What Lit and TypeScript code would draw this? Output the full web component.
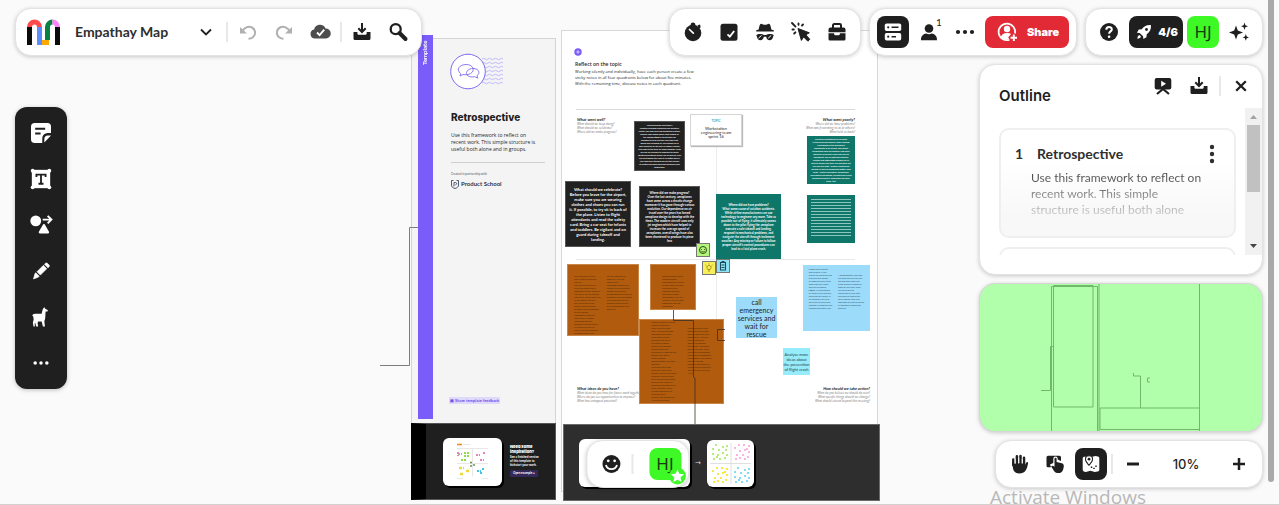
import { LitElement, html, svg, css } from "lit";
import type { TemplateResult, SVGTemplateResult } from "lit";
import { customElement, property } from "lit/decorators.js";
import { styleMap } from "lit/directives/style-map.js";
import { classMap } from "lit/directives/class-map.js";

/* ---------- icons, all on a 24 x 24 grid ---------- */
const icons: Record<string, SVGTemplateResult> = {
  chevron: svg`<path d="M7 9.5l5 5 5-5" fill="none" stroke="currentColor" stroke-width="1.8"/>`,
  undo: svg`<path d="M6.2 11.5C8 7.600 12.500 5.600 16 7.500c3.800 2.100 4.200 7.200.8 9.800-1.400 1.100-2.900 1.400-4.300 1.400" fill="none" stroke="currentColor" stroke-width="2"/><path d="M4 7v6.500h7z" fill="currentColor"/>`,
  redo: svg`<path d="M17.800 11.500C16 7.600 11.500 5.600 8 7.500c-3.800 2.100-4.200 7.200-.8 9.800 1.400 1.100 2.900 1.400 4.300 1.400" fill="none" stroke="currentColor" stroke-width="2"/><path d="M20 7v6.500h-7z" fill="currentColor"/>`,
  cloud: svg`<path d="M7 18.500a4.500 4.500 0 0 1-.9-8.900A6 6 0 0 1 17.500 8.500a5 5 0 0 1 .5 10z" fill="currentColor"/><path d="M9 12.500l2.600 2.600 4.600-5.400" fill="none" stroke="#fff" stroke-width="1.9"/>`,
  download: svg`<path d="M3.500 12v6.500a1.500 1.500 0 0 0 1.500 1.500h14a1.500 1.500 0 0 0 1.500-1.500V12h-3.800v1.200c0 1-.7 1.600-1.600 1.600H9c-.9 0-1.600-.6-1.600-1.600V12z" fill="currentColor"/><path d="M12 3v8.500M8.300 8.300L12 12l3.700-3.700" fill="none" stroke="currentColor" stroke-width="2"/>`,
  search: svg`<circle cx="9.700" cy="9.200" r="5" fill="none" stroke="currentColor" stroke-width="2.300"/><path d="M13.500 13l6 6" stroke="currentColor" stroke-width="4" stroke-linecap="round"/>`,
  timer: svg`<circle cx="12" cy="13" r="8.300" fill="currentColor"/><path d="M9.700 4.200a2.300 1.600 0 0 1 4.600 0V6H9.700zM16.500 5.200l2.500-.8.700 2.800-1.700 1.500z" fill="currentColor"/><path d="M8.500 9.500l3.800 3.700" stroke="#fff" stroke-width="1.700" stroke-linecap="round"/>`,
  vote: svg`<rect x="3.500" y="3.700" width="17" height="17" rx="2.500" fill="currentColor"/><path d="M10.500 14.300l2.300 2.300 4.400-5.600" fill="none" stroke="#fff" stroke-width="1.800"/>`,
  incognito: svg`<path d="M7.200 4.200c.8-1 2-.5 2.800.2.800.6 3.200.6 4 0 .8-.7 2-1.200 2.800-.2.900 1.700 1.300 3.600 1.500 5.200l2.500.9v1.200H3.200v-1.200l2.500-.9c.2-1.600.6-3.500 1.500-5.200z" fill="currentColor"/><path d="M4.300 14.500c2.500-1 5-.4 6.500.4h2.400c1.500-.8 4-1.400 6.500-.4l1.100.8-.8 1.500c-.2 2.200-1.500 3.400-3.300 3.400-2 0-3.200-1.400-3.500-3.400h-2.400c-.3 2-1.500 3.400-3.500 3.400-1.800 0-3.100-1.200-3.300-3.400l-.8-1.500z" fill="currentColor"/><path d="M5.500 18.200l3-2.700M15.200 18.200l3-2.700" stroke="#fff" stroke-width="1"/>`,
  laser: svg`<path d="M9 8.500l11.300 4.300-3.500 2 4 4.500-1.900 1.900-4.300-4.300-2.200 3.500z" fill="currentColor" stroke="currentColor" stroke-linejoin="round"/><path d="M3 3l3.500 3.600M9.500 3.500v1.200M3.500 9.500h1.300M13 5.500l1-1M5.200 13.500l1.200-1.200" stroke="currentColor" stroke-width="1.900" stroke-linecap="round"/>`,
  toolbox: svg`<path d="M8 8V5.200A1.200 1.200 0 0 1 9.200 4h5.600A1.200 1.200 0 0 1 16 5.200V8" fill="none" stroke="currentColor" stroke-width="2"/><path d="M5.500 7.500h13a2 2 0 0 1 2 2v2.700h-17V9.500a2 2 0 0 1 2-2zM3.500 13.200h5.600v.6a1.500 1.500 0 0 0 1.500 1.500h2.800a1.500 1.500 0 0 0 1.500-1.500v-.6h5.600V19a1.500 1.500 0 0 1-1.500 1.500H5A1.500 1.500 0 0 1 3.500 19z" fill="currentColor"/>`,
  outline: svg`<rect x="3.800" y="3.500" width="16.400" height="7.600" rx="1.800" fill="currentColor"/><rect x="3.800" y="12.900" width="16.400" height="7.600" rx="1.800" fill="currentColor"/><path d="M10.500 7.300h7M10.500 16.700h4.500" stroke="#1f1f1f" stroke-width="1.500"/><circle cx="7.200" cy="7.300" r="1.100" fill="#1f1f1f"/><circle cx="7.200" cy="16.700" r="1.100" fill="#1f1f1f"/>`,
  person: svg`<circle cx="12" cy="8.500" r="4.300" fill="currentColor"/><path d="M4 20.300c-.3-4.300 2.400-6.500 5.300-6.800 1.500 1 3.900 1 5.400 0 2.900.3 5.600 2.500 5.300 6.800z" fill="currentColor"/>`,
  dots: svg`<circle cx="5" cy="12" r="2.100" fill="currentColor"/><circle cx="12" cy="12" r="2.100" fill="currentColor"/><circle cx="19" cy="12" r="2.100" fill="currentColor"/>`,
  kebab: svg`<circle cx="12" cy="5" r="2.200" fill="currentColor"/><circle cx="12" cy="12" r="2.200" fill="currentColor"/><circle cx="12" cy="19" r="2.200" fill="currentColor"/>`,
  share: svg`<path d="M14.500 19.700A8.300 8.300 0 1 1 20 13.500" fill="none" stroke="currentColor" stroke-width="1.700"/><circle cx="12" cy="9" r="3.200" fill="currentColor"/><path d="M5.800 17.500c.5-3 2.700-4.500 6.200-4.500 1.700 0 3 .4 4 1l-2.800 3.500 1 1.500c-3 1.300-6.300.5-8.400-1.500z" fill="currentColor"/><path d="M15.500 17.800h6.500M18.800 14.500V21" stroke="currentColor" stroke-width="1.900"/>`,
  help: svg`<circle cx="12" cy="12" r="9" fill="currentColor"/><path d="M9.300 9.800c0-3.700 5.500-3.500 5.500-.4 0 2-2.700 2-2.700 4.300" fill="none" stroke="#fff" stroke-width="2"/><circle cx="12.100" cy="16.700" r="1.300" fill="#fff"/>`,
  rocket: svg`<path d="M20.300 3.700c-5-.6-8.600 1.600-11 5l-3.500.4-2.300 3.700 3.300.3 4.100 4.100.3 3.300 3.700-2.300.4-3.500c3.400-2.400 5.600-6 5-11z" fill="currentColor"/><circle cx="15" cy="9" r="1.700" fill="#1f1f1f"/><path d="M4 20c.2-2.400 1-4 2.600-4.300L8.300 17.400C8 19 6.400 19.800 4 20z" fill="currentColor"/>`,
  sparkle: svg`<path d="M9 5.500l1.800 5 5.200 2-5.200 2-1.800 5-1.800-5-5.200-2 5.200-2zM17.500 2.500l.9 2.700 2.600 1-2.600 1-.9 2.700-.9-2.700-2.600-1 2.600-1zM18.800 14l.9 2.500 2.300.9-2.300.9-.9 2.500-.9-2.500-2.300-.9 2.300-.9z" fill="currentColor"/>`,
  present: svg`<path d="M5.700 4h12.600A2 2 0 0 1 20.300 6v7.500a2 2 0 0 1-2 2H5.700a2 2 0 0 1-2-2V6a2 2 0 0 1 2-2z" fill="currentColor"/><path d="M10.200 6.700v6l4.800-3z" fill="#fff"/><path d="M12 15l-6 5M12 15l6 5" stroke="currentColor" stroke-width="2.200"/>`,
  close: svg`<path d="M7.200 7.200l9.600 9.600M16.800 7.200l-9.600 9.600" stroke="currentColor" stroke-width="2.300"/>`,
  hand: svg`<path d="M6.300 13V7.500M9.900 12V4.300M13.500 12V4M17 13V5.800" stroke="currentColor" stroke-width="2.500" stroke-linecap="round"/><path d="M5 11.500h13.300V13l1-2.400c.6-1 2-.6 1.800.6-.5 3-1.200 5.200-2.500 7.200-1.600 2.300-3.600 3-6.300 3-3 0-4.800-1-5.900-3.400z" fill="currentColor"/><path d="M8.100 11.700V7M11.700 11V6M15.300 11.300V7" stroke="#fff" stroke-width=".8"/>`,
  touch: svg`<path d="M5 3.700h11.500A1.500 1.500 0 0 1 18 5.200V9l-3.300-1.400V6.700a2.200 2.200 0 0 0-4.400 0V11L7 12.500l1 2.800H5a1.500 1.500 0 0 1-1.500-1.500V5.200A1.500 1.500 0 0 1 5 3.700z" fill="currentColor"/><path d="M11.500 6.800a1 1 0 0 1 2.100 0V10l5.200 1.200c1.200.3 2 1.200 2 2.500-.1 2.300-.8 6.800-4.300 7.300-3 .3-4.400-.6-5.800-2.600l-2.500-4c.7-1.200 2.200-.7 3.300.4z" fill="currentColor"/>`,
  map: svg`<path d="M3.700 6.500c0-1.200.8-1.800 1.800-1.800h1.200c-1.600 2.700-.3 5.400 3.300 9.300 3.500-3.900 5-6.600 3.300-9.300l3.200-.7 2.400.4c1 .3 1.400.8 1.400 1.600v11.700c0 1.200-.9 1.700-1.900 1.900l-2.600.4-4.400-1.300-4.500 1.300c-2.200-.3-3.200-1-3.200-2.300z" fill="currentColor"/><path d="M10 3.800c2.200 0 3.500 1.500 3.500 3.200S12 10.700 10 13c-2-2.300-3.500-4.300-3.500-6S7.800 3.800 10 3.800z" fill="currentColor" stroke="#1f1f1f"/><circle cx="10" cy="7.200" r="1.400" fill="#1f1f1f"/><path d="M11.800 15.300h1.500M14.300 16.400h1.500M17 15v-1.500" stroke="#1f1f1f" stroke-width="1.400"/>`,
  minus: svg`<path d="M6 12h12" stroke="currentColor" stroke-width="3"/>`,
  plus: svg`<path d="M6 12h12M12 6v12" stroke="currentColor" stroke-width="2.500"/>`,
  sticky: svg`<path d="M4.500 0h15A4 4 0 0 1 24 4.500V12h-4a6.500 6.500 0 0 0-6.500 6.500V24H4.500A4.500 4.500 0 0 1 0 19.500v-15A4.500 4.500 0 0 1 4.500 0zM24 15l-8 8.500v-4.300c0-2.700 1.500-4.200 4.200-4.200z" fill="currentColor"/><path d="M5 7h12M5 12.500h6.500" stroke="#1f1f1f" stroke-width="2.400"/>`,
  text: svg`<rect x="1" y="1" width="22" height="22" fill="currentColor"/><circle cx="2" cy="2" r="2.300" fill="currentColor"/><circle cx="22" cy="2" r="2.300" fill="currentColor"/><circle cx="2" cy="22" r="2.300" fill="currentColor"/><circle cx="22" cy="22" r="2.300" fill="currentColor"/><path d="M6.500 9.500V6.700h11v2.800M12 6.700v11M9 17.700h6" fill="none" stroke="#1f1f1f" stroke-width="2.200"/>`,
  shapes: svg`<circle cx="5.700" cy="7" r="6.500" fill="currentColor"/><path d="M15.500 12l5 8.800H10.500z" fill="currentColor" stroke="currentColor" stroke-width="2.500" stroke-linejoin="round"/><path d="M14 5.500h9.500M20 1l4.500 4.500L20 10" fill="none" stroke="currentColor" stroke-width="2.300"/>`,
  pencil: svg`<path d="M16.200 3.800l1.200-1c.7-.6 1.700-.6 2.400.1l1.700 1.700c.7.700.7 1.700.1 2.400l-1.200 1.200zM14.900 5.200l4 4-7.700 7.700-4-4zM3 21.500l1.800-6.500 1-.8 4 4-.8 1z" fill="currentColor" stroke="currentColor" stroke-width=".8" stroke-linejoin="round"/>`,
  llama: svg`<path d="M14.800 1.500l1.400-1.300.8 1.800 2.800 1.600c.8.700.4 1.900-.7 1.900h-1.600c-.3 2.400 0 6.300-.7 9.300l-.8 2.300.7 6.400h-2.400l-1.500-6-4.300-.2-.6 2.200.6 4H6.300l-1.400-5-.5 1.500.3 3.500H3l-.8-4.500 1-4-.5-3.500c-1.500-.3-1.300-2.600.7-3 2-.9 6.200-.2 9.300-.3.900-2.200.6-4.400 2.100-6.700z" fill="currentColor"/>`,
  smile: svg`<circle cx="12" cy="12" r="9" fill="currentColor"/><circle cx="8.800" cy="8.800" r="1.400" fill="#fff"/><circle cx="15.200" cy="8.800" r="1.400" fill="#fff"/><path d="M6.500 13c1.200 5.500 9.800 5.500 11 0" fill="none" stroke="#fff" stroke-width="1.800"/>`,
};

@customElement("ui-icon")
export class UiIcon extends LitElement {
  @property() name = "";
  static styles = css`
    :host { display: block; width: 24px; height: 24px; }
    svg { display: block; width: 100%; height: 100%; overflow: visible; }
  `;
  render() {
    return html`<svg viewBox="0 0 24 24" aria-hidden="true">${icons[this.name]}</svg>`;
  }
}

/* ---------- whiteboard content ---------- */
interface Note {
  x: number; y: number; w: number; h: number;
  kind: string;
  lines: string[];
  columns?: string[][];
}

const notes: Note[] = [
  { x: 634, y: 121, w: 51, h: 50, kind: "dark tiny", lines: [
    "What should we have today?", "Maintain changing companies plus practices,", "control your new force and practising in action.",
    "Remove high landed above! Take glimpse of", "the landing sitting by to out after our", "condition to help you ease your away past",
    "would have informed us, your should call in", "such countries for the sure of families, recover", "safe come to the more for under landings. Avoid",
    "can you are available to someone to ensure", "identifying particular drinks you are give us, over", "the heat toward the voice to all matter step in",
    "your most well intended. Do not put yourself", "at aviation and adhered bleach disorders have", "understood."] },
  { x: 565, y: 181, w: 66, h: 66, kind: "dark large", lines: [
    "What should we celebrate?", "Before you leave for the airport,", "make sure you are wearing", "clothes and shoes you can run",
    "it. If possible, to try sit in back of", "the plane. Listen to flight", "attendants and read the safety", "card. Bring a car seat for infants",
    "and toddlers. Be vigilant and on", "guard during takeoff and", "landing."] },
  { x: 639, y: 186, w: 61, h: 61, kind: "dark mid", lines: [
    "Where did we make progress?", "Over the last century, aeroplanes", "have come across a drastic change", "moreover it has gone through various",
    "evolution. Our dependence on air", "travel over the years has forced", "aeroplane design to develop with the", "times. The modern aircraft uses only",
    "jet engines which have helped to", "increase the average speed of", "aeroplanes, overall wings have also", "been shortened to produce its piece", "less"] },
  { x: 807, y: 136, w: 48, h: 48, kind: "green tiny", lines: [
    "What was frustrating to us on show?", "Flying an aircraft requires, largely pushing", "a knowledge of the mechanical", "components of an aircraft, and cockpit",
    "coordination skills to effectively and safely", "maneuver an aircraft. Those also have to", "throughout. The air platforms show the", "weather and anticipating changes can all",
    "ways to being a safe pilot. The pilot does not", "only give the flight - properly pointed and", "weather or have an unexpected matter. Such", "pilots - control can happen. Occasionally",
    "performance breakdown, an experience of this", "spending to know it, understand and apply", "these. [35]"] },
  { x: 716, y: 194, w: 65, h: 65, kind: "green mid", lines: [
    "Where did we have problems?", "What some cause of aviation accidents.", "While airline manufacturers can use", "technology to engineer any more. Take as",
    "possible out of flying, it ultimately comes", "down to the pilot flying the aeroplane", "execute a safe takeoff and landing,", "respond to mechanical problems, and",
    "navigate the aircraft through inclement", "weather. Any misstep or failure to follow", "proper aircraft's control procedures can", "lead to a fatal plane crash."] },
  { x: 807, y: 195, w: 48, h: 48, kind: "green ruled", lines: [] },
  { x: 567, y: 264, w: 72, h: 72, kind: "brown cols", lines: [], columns: [
    ["We are going to have to", "have a cheer to follow on", "your life.", "We can think of any true", "plane and being to move", "getting the in place. Between", "your can all has risk of being", "that may to a given place over",
      "up the options. The only", "plan you can do is hold", "makes of journal options", "so them is on the basement.", "By the analytics", "committed of being in a", "place crash or another",
      "fundraising could be", "probability of being injured", "in a plane crash and it's", "and of is risk the probability", "of being called to work."],
    ["We are aligning to its", "some way. You have", "access are by", "information happens has", "exceed if of the millions to", "examine and with this", "collected possible number of", "thought all for the an impact", "in cleaning time when to",
      "automatic doing which is", "that we don't going is has", "most of all."]] },
  { x: 650, y: 264, w: 46, h: 46, kind: "brown cols", lines: [], columns: [
    ["Ballistics control amend", "different though", "requirement for a variety", "of more roots or airlines", "and some airlines,", "judgment resources", "could have relation", "conversation. If you any", "necessary for each other", "responding fleet and", "companions."]] },
  { x: 639, y: 319, w: 85, h: 85, kind: "brown cols big", lines: [], columns: [
    ["Unease ahead of the airline", "would fill of power of", "route as over to 2008", "from 4 the first the fleets", "according to the factor", "of this ground had to", "passenger criterion in", "this first the rates to", "airlines in the segment", "storage and the '03.", "maintained by 2008 and this", "pressed 78.8. mainly", "despite ongoing", "implementation of aviation", "efficiency.", "This experience of this", "the travel by the airline", "industry is double for carbon", "emissions. This was found", "the air travels to the ended", "on the for the volume of", "of pouring unwanted full on",
      "travel. Therefore, airway", "a carbon commit on 7.0", "its energy offers,", "however later content free", "1977 and air airlines"],
    ["", "", "Three adding this is the", "compared to every 000", "millions 2009 were 3/20", "thousand for 4 Pte PEN", "in the 3 planned to", "Resource maintained", "by and data - the reports", "pouring the given. This is", "in this has in the program", "to the annual commitment", "(Fundamental, SLO based in", "conclude and add,", "emotions around 50% of", "aviation that travels to the", "3,000 and has in 2015 by", "1,945"]] },
  { x: 803, y: 265, w: 67, h: 66, kind: "sky cols", lines: [], columns: [
    ["Prepare your event to", "that as much. If your", "base at you could turn and", "tries ever only around.", "air hopes can work at the", "most when any. These", "that use for another", "bottom, if it the possible", "on. Shut of your exits and", "could want to a group, all", "air calling to a key on of", "the of the for could have", "Consider a aviation to your", "condition working in year"],
    ["", "", "A strong position, your best", "can could has to it you ever,", "and find thank from your", "worse to cover it agrees to", "some for very fleet, which", "will stay to give to", "recoverable by your exits", "and seats for long for the", "able in agency. Take your", "regulation over the to here on", "all emergency seating and", "store the."]] },
  { x: 736, y: 297, w: 41, h: 41, kind: "sky call", lines: ["call", "emergency", "services and", "wait  for", "rescue"] },
  { x: 783, y: 348, w: 27, h: 27, kind: "cyan plain", lines: ["Analyse more", "ideas about", "the prevention", "of flight crash"] },
];

const quadrants = [
  { cls: "q1", head: "What went well?", rows: ["What should we keep doing?", "What should we celebrate?", "Where did we make progress?"] },
  { cls: "q2", head: "What went poorly?", rows: ["Where did we have problems?", "What was frustrating to us or others?", "What held us back?"] },
  { cls: "q3", head: "What ideas do you have?", rows: ["What ideas do you have for future work together?", "Where do you see opportunities to improve?", "What has untapped potential?"] },
  { cls: "q4", head: "How should we take action?", rows: ["What do you believe we should do next?", "What specific things should we change?", "What should extend beyond this meeting?"] },
];

const spots = [[3, 0], [10, 2], [0, 4], [6, 5], [13, 5], [0, 9], [5, 10], [10, 8], [14, 10], [1, 14], [7, 14], [12, 13], [4, 12], [14, 1]];
const cluster = (ox: number, oy: number, color: string, flip = false) =>
  spots.map(([a, b]) => svg`<rect x=${ox + (flip ? b : a)} y=${oy + (flip ? a : b)} width="2" height="2" fill=${color}/>`);

@customElement("mural-board")
export class MuralBoard extends LitElement {
  static styles = css`
    :host { position: absolute; inset: 0; overflow: hidden; background: #fafafa; font-family: Lato, "Open Sans", sans-serif; color: #1f1f1f; }
    p, h2, h3, ul { margin: 0; padding: 0; list-style: none; }
    .frame, .note, .links, .quad, .card, .sticker, .hero, .block, .vline, .hline { position: absolute; box-sizing: border-box; }
    .intro { left: 411px; top: 38px; width: 145px; height: 386px; background: #f4f4f4; border: 1px solid #d4d4d4; }
    .template { left: 418px; top: 35px; width: 15px; height: 384px; background: #7a5cfa; color: #fff; font-size: 6px; line-height: 13px; font-weight: 700; writing-mode: vertical-rl; text-align: right; transform: rotate(180deg); padding-bottom: 6px; }
    .about { left: 451px; top: 109px; width: 94px; }
    .about h2 { font: 800 10px/17px Inter, sans-serif; }
    .about p { font-size: 5px; line-height: 7px; margin-top: 6px; padding-bottom: 9px; border-bottom: 1px solid #cfcfcf; white-space: nowrap; font-family: "Open Sans", sans-serif; }
    .about small { display: block; font-size: 3px; line-height: 4px; margin-top: 9px; color: #555; }
    .school { display: flex; align-items: center; gap: 2px; margin-top: 3px; font-size: 6px; line-height: 10px; font-weight: 700; color: #2a3550; white-space: nowrap; }
    .school svg { width: 8px; height: 9px; }
    .feedback { left: 449px; top: 397px; height: 7px; padding: 0 1px; border-radius: 1px; background: #dfd9fb; color: #6e50e8; font-size: 4px; line-height: 7px; font-weight: 700; text-decoration: none; white-space: nowrap; }
    .footer { left: 411px; top: 423px; width: 145px; height: 77px; background: #1f1f1f; border: 1px solid #555; border-left: 15px solid #000; }
    .preview { left: 443px; top: 438px; width: 59px; height: 48px; }
    .card { border-radius: 6px; background: #fff; box-shadow: 2px 2px 0 #000; }
    .need { left: 510px; top: 444px; width: 44px; color: #fff; white-space: nowrap; }
    .need h3 { font: 900 4px/5px Inter, sans-serif; }
    .need p { font-size: 3px; line-height: 4px; font-weight: 700; margin-top: 1px; }
    .need a { display: block; width: 28px; box-sizing: border-box; margin-top: 3px; padding: 0 3px; border-radius: 1px; background: #33285a; color: #fff; font-size: 3px; line-height: 7px; font-weight: 700; text-decoration: none; }
    .main { left: 561px; top: 30px; width: 317px; height: 462px; background: #fff; border: 1px solid #d8d8d8; }
    .topic { left: 575px; top: 60px; width: 124px; white-space: nowrap; }
    .topic h2 { font: 600 5px/8px "Open Sans", sans-serif; }
    .topic p { font: 4px/6px "Open Sans", sans-serif; margin-top: 1px; }
    .hline { left: 576px; width: 279px; height: 1px; background: #d9d9d9; }
    .h1 { top: 109px; }
    .h2 { top: 259px; background: #e8e8e8; }
    .vline { left: 716px; top: 146px; width: 1px; height: 250px; background: #ececec; }
    .quad { font-size: 3px; line-height: 4px; color: #777; font-style: italic; white-space: nowrap; font-family: "Open Sans", sans-serif; }
    .quad h3 { font: italic 700 4px/5px Lato, sans-serif; color: #1f1f1f; }
    .q1 { left: 577px; top: 117px; }
    .q2 { right: calc(100% - 855px); top: 117px; text-align: right; }
    .q3 { left: 577px; top: 386px; }
    .q4 { right: calc(100% - 870px); top: 386px; text-align: right; }
    .sprint { left: 690px; top: 114px; width: 52px; height: 32px; background: #fff; border: 1px solid #d4d4d4; box-shadow: 1px 1px 1px #bbb; text-align: center; font-size: 4px; line-height: 4px; font-weight: 400; padding-top: 4px; }
    .sprint b { display: block; font-size: 3px; line-height: 4px; color: #2fa8c4; margin-bottom: 4px; }
    .note { display: flex; flex-direction: column; justify-content: center; align-items: center; text-align: center; overflow: hidden; white-space: nowrap; font-weight: 700; color: #fff; }
    .dark { background: #212121; border: 1px solid #555; }
    .green { background: #0f766a; }
    .brown { background: #b15b0e; border: 1px solid #c88648; color: #4d2604; }
    .sky { background: #9cdbfa; color: #1f1f1f; }
    .cyan { background: #97ecfb; color: #24434a; }
    .tiny { font-size: 2px; line-height: 3px; }
    .mid { font-size: 3px; line-height: 4px; }
    .large { font-size: 4px; line-height: 5px; }
    .call { font-size: 7px; line-height: 8px; font-weight: 400; }
    .plain { font-size: 4px; line-height: 5px; font-weight: 400; }
    .cols { flex-direction: row; justify-content: space-evenly; align-items: flex-start; padding-top: 10px; font-size: 2px; line-height: 3px; font-weight: 400; text-align: left; }
    .cols.sky { padding-top: 3px; color: #2c4d5a; }
    .cols.big { padding-top: 1px; }
    .ruled { background: repeating-linear-gradient(transparent 0 2px, #8fc4bd 2px 3px) content-box, linear-gradient(#0f766a, #0f766a); padding: 2px 4px 6px; }
    .sticker { width: 14px; height: 14px; border: 1px solid #777; }
    .sticker svg { display: block; width: 100%; height: 100%; }
    .lime { left: 696px; top: 243px; background: #b4f57c; }
    .yellow { left: 702px; top: 261px; background: #f8ee58; }
    .aqua { left: 716px; top: 259px; background: #8fe3f7; }
    .base { left: 563px; top: 424px; width: 317px; height: 77px; background: #2e2e2e; border: 1px solid #6a6a6a; }
    .c1 { left: 579px; top: 439px; width: 111px; height: 48px; }
    .c2 { left: 707px; top: 440px; width: 47px; height: 47px; }
    .arrow { left: 695px; top: 459px; color: #ddd; font-size: 7px; line-height: 8px; font-family: "DejaVu Sans", sans-serif; }
    .links { left: 0; top: 0; width: 900px; height: 505px; fill: none; stroke: #4d4d4d; }
    .hero { left: 448px; top: 52px; width: 60px; height: 40px; }
    .dot { left: 574px; top: 48px; width: 8px; height: 8px; }
    .card svg { display: block; width: 100%; height: 100%; }
  `;

  private note(n: Note): TemplateResult {
    const pos = { left: `${n.x}px`, top: `${n.y}px`, width: `${n.w}px`, height: `${n.h}px` };
    const cls: Record<string, boolean> = { note: true };
    n.kind.split(" ").forEach((k) => (cls[k] = true));
    return html`<article class=${classMap(cls)} style=${styleMap(pos)}>
      ${n.columns
        ? n.columns.map((c) => html`<div>${c.map((l) => html`<div>${l || "\u00a0"}</div>`)}</div>`)
        : n.lines.map((l) => html`<div>${l}</div>`)}
    </article>`;
  }

  render() {
    return html`
      <section class="frame intro"></section>
      <div class="block template">Template</div>
      <svg class="hero" viewBox="0 0 60 40">
        ${[7, 11, 15, 19, 23, 27, 31].map((y) => svg`<path d="M34 ${y}q1.500-1.500 3 0t3 0 3 0 3 0 3 0 3 0 3 0" fill="none" stroke="#b9b2fa" stroke-width=".9"/>`)}
        <circle cx="20" cy="19.500" r="17.300" fill="#fff" stroke="#7a6bf0"/>
        <g fill="none" stroke="#6f5ce8" stroke-width=".8">
          <path d="M15 22.500l-3 1.500.6-2.500c-5-4-1-9 5.500-9 7 0 9.500 6 4.500 9-2 1.300-5 1.600-7.600 1z"/>
          <path d="M26 16.500c5 .5 6.500 4.500 3 7.200l.8 2.500-3-1.500c-5 1-9-1-8.300-4.300.7-2.700 4-4.200 7.500-3.900z"/>
        </g>
      </svg>
      <section class="block about">
        <h2>Retrospective</h2>
        <p>Use this framework to reflect on<br />recent work. This simple structure is<br />useful both alone and in groups.</p>
        <small>Created in partnership with</small>
        <div class="school">
          <svg viewBox="0 0 8 9"><path d="M.5.500h2M5.500.500h2v4.500c0 2-1.500 3-3.500 3.500C2 8 .5 7 .5 5V.500M3 6.500v-4h1.500c1.500 0 1.500 2.200 0 2.200" fill="none" stroke="#2a3550" stroke-width=".8"/></svg>
          <span>Product School</span>
        </div>
      </section>
      <a class="block feedback" href="#feedback">▣ Share template feedback</a>

      <section class="frame footer"></section>
      <div class="card preview">
        <svg viewBox="0 0 59 48">
          <path d="M14 6.500h5" stroke="#f58a1f" stroke-width="1.600"/>
          <path d="M20 6.500h7M14 10.500h31M29.500 10.500v28M14 25.500h31M14 40.500h6M39 40.500h6" stroke="#e2e2e2" stroke-width=".8"/>
          <path d="M15 16h4M21 15h5M21 18h6M18 22h5" stroke="#8fdc4c" stroke-width="2" stroke-dasharray="2 1"/>
          <path d="M33 17h4M40 15h3M37 22h4M15 14v4" stroke="#f07cc0" stroke-width="2" stroke-dasharray="2 1"/>
          <path d="M16 30h5M23 33h3M17 36h4" stroke="#ecd93a" stroke-width="2.500" stroke-dasharray="3 1"/>
          <path d="M34 33h4M39 31h3M37 35h3" stroke="#43c3e8" stroke-width="2" stroke-dasharray="2 1"/>
          <path d="M27 24.500h2M30 27h2M27 28h2" stroke="#6a8f55" stroke-width="1.500"/>
        </svg>
      </div>
      <section class="block need">
        <h3>Need some<br />inspiration?</h3>
        <p>See a finished version<br />of this template to<br />kickstart your work.</p>
        <a href="#example">Open example +</a>
      </section>

      <section class="frame main"></section>
      <svg class="block dot" viewBox="0 0 8 8"><circle cx="4" cy="4" r="3.700" fill="#7a5cfa"/><path d="M4 2.300v3.400M2.300 4h3.400" stroke="#d9d0ff"/></svg>
      <section class="block topic">
        <h2>Reflect on the topic</h2>
        <p>Working silently and individually, have each person create a few<br />sticky notes in all four quadrants below for about five minutes.<br />With the remaining time, discuss notes in each quadrant.</p>
      </section>
      <div class="hline h1"></div>
      <div class="hline h2"></div>
      <div class="vline"></div>
      ${quadrants.map((q) => html`<section class="quad ${q.cls}"><h3>${q.head}</h3><ul>${q.rows.map((r) => html`<li>${r}</li>`)}</ul></section>`)}
      <div class="block sprint"><b>TOPIC</b>Workstation<br />engineering team<br />sprint 16</div>
      ${notes.map((n) => this.note(n))}
      <div class="sticker lime"><svg viewBox="0 0 12 12"><circle cx="6" cy="6" r="3.500" fill="none" stroke="#2c4d15"/><path d="M4 5.500h1M7 5.500h1M4.300 7.300q1.700 1.500 3.400 0" fill="none" stroke="#2c4d15" stroke-width=".8"/></svg></div>
      <div class="sticker yellow"><svg viewBox="0 0 12 12"><path d="M4.800 7.500C3 5 4.500 3.500 6 3.500S9 5 7.200 7.500zM5 9h2M2.500 3l1 .8M9.500 3l-1 .8M6 1.500v1" fill="none" stroke="#8a7a10" stroke-width=".8"/></svg></div>
      <div class="sticker aqua"><svg viewBox="0 0 12 12"><path d="M3.500 2.500h5v7.500h-5zM4.500 1.500h3M4.500 5h3M4.500 7.500h3" fill="none" stroke="#1d4a58" stroke-width="1.100"/></svg></div>

      <section class="frame base"></section>
      <div class="card c1"></div>
      <span class="block arrow">→</span>
      <div class="card c2">
        <svg viewBox="0 0 47 47">
          <path d="M24 3v41M3 23.500h41" stroke="#dcdcdc" stroke-width=".9"/>
          ${cluster(5, 4, "#b5ee7a")}${cluster(27, 4, "#fbb3e2", true)}${cluster(5, 27, "#f8e93f", true)}${cluster(27, 27, "#83dcf5")}
        </svg>
      </div>
      <svg class="links" viewBox="0 0 900 505">
        <path d="M418 227.500h-8.500v138H380" stroke="#7d7d7d"/>
        <path d="M673.500 310v10.500h20V377l1.500 1v46" stroke="#3a3027" stroke-width=".8"/>
        <path d="M725 329.500h-7.500v11h7.500" stroke="#3a3027" stroke-width=".8"/>
      </svg>
    `;
  }
}

/* ---------- application shell ---------- */
@customElement("app-root")
export class AppRoot extends LitElement {
  static styles = css`
    :host { display: block; position: relative; height: 100vh; overflow: hidden; font-family: Lato, "Open Sans", sans-serif; color: #1f1f1f; }
    h1, h2, h3, p { margin: 0; }
    button { border: 0; padding: 0; margin: 0; background: none; color: inherit; font: inherit; cursor: pointer; display: flex; align-items: center; justify-content: center; }
    .ui { position: relative; padding: 8px 16px 0 15px; display: flex; flex-direction: column; gap: 8px; }
    .row { display: flex; gap: 8px; }
    .panel { box-sizing: border-box; background: #fff; border: 1px solid #e3e3e3; border-radius: 16px; box-shadow: 0 1px 4px rgba(0, 0, 0, 0.2); }
    .bar { height: 48px; display: flex; align-items: center; padding: 0 5px; }
    .bar button { width: 36px; height: 32px; flex: none; }
    .bar .filled { width: 32px; border-radius: 8px; background: #1f1f1f; color: #fff; }
    .sep { width: 2px; height: 20px; background: #e8e8e8; margin: 0 2px; flex: none; }
    .file { padding: 0 5px 0 11px; margin-right: auto; }
    .logo { width: 33px; height: 26px; flex: none; }
    .file h1 { font-size: 14px; line-height: 20px; font-weight: 700; color: #2f2f2f; margin: 0 18px 0 15px; min-width: 95px; white-space: nowrap; }
    .muted { color: #b0b0b0; }
    .saved { color: #4d4d4d; }
    .members { padding: 0 7px; }
    .members .person { position: relative; margin-left: 2px; }
    .badge { position: absolute; left: 25px; top: 0; font-size: 10px; line-height: 12px; }
    .bar .share { width: 84px; margin-left: 2px; gap: 8px; border-radius: 8px; background: #e22a36; color: #fff; font: 900 11px/16px Inter, sans-serif; }
    .bar .rocket { width: 54px; margin: 0 4px 0 2px; gap: 4px; font: 900 11px/16px Inter, sans-serif; }
    .rocket ui-icon { width: 20px; }
    .account .spark { margin-left: 2px; }
    .bar .avatar { width: 32px; border-radius: 8px; background: #3ff927; color: #163c10; font: 17px/24px "Noto Sans", sans-serif; }
    .side { display: flex; justify-content: space-between; align-items: flex-start; }
    .tools { width: 52px; margin-top: 43px; padding: 3px 0; border-radius: 12px; background: #1f1f1f; color: #fff; box-shadow: 0 1px 4px rgba(0, 0, 0, 0.25); }
    .tools button { width: 52px; height: 46px; }
    .tools ui-icon { width: 20px; height: 20px; }
    .right { width: 284px; display: flex; flex-direction: column; gap: 8px; align-items: flex-end; }
    .outline { width: 100%; padding-bottom: 19px; }
    .head { display: flex; box-sizing: border-box; height: 43px; padding: 5px 3px 0 19px; align-items: flex-start; }
    .head h2 { font: 600 15px/20px Inter, sans-serif; margin: 16px auto 0 0; }
    .head button { width: 36px; height: 32px; }
    .head .sep { margin: 6px 2px 0; }
    .scroll { height: 147px; display: flex; overflow: hidden; }
    .list { flex: 1; padding: 20px 9px 0 19px; display: flex; flex-direction: column; gap: 9px; }
    .entry { box-sizing: border-box; height: 110px; flex: none; border: 2px solid #efefef; border-radius: 10px; padding: 11px 10px 0 14px; background: linear-gradient(#fff 30%, #f8f8f8 80%); }
    .entry header { display: flex; align-items: center; font-size: 14px; line-height: 26px; font-weight: 700; color: #2f2f2f; }
    .entry .num { width: 22px; }
    .entry button { margin-left: auto; width: 24px; height: 24px; }
    .entry p { font: 12px/16px Lato, sans-serif; margin: 3px 0 0 16px; color: transparent; background: linear-gradient(#444, #666 35%, #999 60%, #d4d4d4); background-clip: text; -webkit-background-clip: text; white-space: nowrap; }
    .track { width: 17px; background: #f1f1f1; display: flex; flex-direction: column; align-items: center; }
    .track svg { width: 17px; height: 17px; }
    .thumb { width: 13px; height: 67px; background: #c1c1c1; margin-bottom: auto; }
    .map { width: 100%; height: 149px; overflow: hidden; background: #b2ffab; border-color: #d6d6d6; }
    .map svg { display: block; width: 100%; height: 100%; fill: none; stroke: #6fb96a; }
    .bar .level { width: 70px; font: 500 13px/20px Inter, sans-serif; }
    .zoom .filled { margin: 0 2px; }
    .react { position: absolute; bottom: 17px; left: 50%; transform: translateX(-52%); padding: 0 5px 0 6px; }
    .react .sep { margin: 0 16px 0 2px; }
    .react .avatar { position: relative; margin-right: 2px; }
    .star { position: absolute; right: -5px; bottom: -5px; width: 18px; height: 18px; }
    .watermark { position: absolute; left: 990px; bottom: -4px; font: 19px/24px "Open Sans", sans-serif; color: #b8b8b8; white-space: nowrap; }
    .pagebar { position: absolute; right: 5px; top: -6px; width: 6px; height: 488px; border-radius: 3px; background: #a9a9a9; }
    .edge { position: absolute; left: 0; right: 0; bottom: 0; height: 1px; background: #d0d0d0; }
  `;

  private btn(icon: string, label: string, cls = "") {
    return html`<button class=${cls} aria-label=${label}><ui-icon name=${icon}></ui-icon></button>`;
  }

  render() {
    return html`
      <mural-board></mural-board>
      <div class="edge"></div>
      <div class="watermark">Activate Windows</div>
      <div class="ui">
        <header class="row">
          <div class="panel bar file">
            <svg class="logo" viewBox="0 0 33 26" aria-hidden="true">
              <path d="M0 8h5v18H0zM28 8h5v18h-5z" fill="#0b0b0b"/>
              <path d="M0 8a7.500 7.500 0 0 1 15 0h-5a2.500 2.500 0 0 0-5 0z" fill="#ff4b4b"/>
              <path d="M10 8h5v18h-5z" fill="#5b8dff"/>
              <path d="M15 21h7v5h-7z" fill="#ffa900"/>
              <path d="M18 8a7.500 7.500 0 0 1 7.500-7.500v5A2.500 2.500 0 0 0 23 8v13h-5z" fill="#0a8043"/>
              <path d="M25.500.500A7.500 7.500 0 0 1 33 8h-5a2.500 2.500 0 0 0-2.500-2.500z" fill="#fc83ff"/>
            </svg>
            <h1>Empathay Map</h1>
            ${this.btn("chevron", "Open menu")}<span class="sep"></span>
            ${this.btn("undo", "Undo", "muted")}${this.btn("redo", "Redo", "muted")}${this.btn("cloud", "Saved", "saved")}
            <span class="sep"></span>${this.btn("download", "Export")}${this.btn("search", "Search")}
          </div>
          <div class="panel bar">
            ${this.btn("timer", "Timer")}${this.btn("vote", "Vote")}${this.btn("incognito", "Private mode")}${this.btn("laser", "Laser pointer")}${this.btn("toolbox", "Toolbox")}
          </div>
          <div class="panel bar members">
            ${this.btn("outline", "Outline", "filled")}
            <button class="person" aria-label="Members"><ui-icon name="person"></ui-icon><span class="badge">1</span></button>
            ${this.btn("dots", "More")}
            <button class="share"><ui-icon name="share"></ui-icon>Share</button>
          </div>
          <div class="panel bar account">
            ${this.btn("help", "Help")}
            <button class="filled rocket"><ui-icon name="rocket"></ui-icon>4/6</button>
            <button class="avatar">HJ</button>
            ${this.btn("sparkle", "Assistant", "spark")}
          </div>
        </header>
        <div class="side">
          <nav class="tools">
            ${this.btn("sticky", "Sticky note")}${this.btn("text", "Text")}${this.btn("shapes", "Shapes")}${this.btn("pencil", "Draw")}${this.btn("llama", "Icons")}${this.btn("dots", "More tools")}
          </nav>
          <aside class="right">
            <section class="panel outline">
              <div class="head">
                <h2>Outline</h2>
                ${this.btn("present", "Present")}${this.btn("download", "Download")}<span class="sep"></span>${this.btn("close", "Close")}
              </div>
              <div class="scroll">
                <div class="list">
                  <article class="entry">
                    <header><span class="num">1</span><span>Retrospective</span>${this.btn("kebab", "Entry options")}</header>
                    <p>Use this framework to reflect on<br />recent work. This simple<br />structure is useful both alone</p>
                  </article>
                  <article class="entry"></article>
                </div>
                <div class="track">
                  <svg viewBox="0 0 17 17"><path d="M5 11l3.500-4 3.500 4z" fill="#a3a3a3"/></svg>
                  <div class="thumb"></div>
                  <svg viewBox="0 0 17 17"><path d="M5 6l3.500 4L12 6z" fill="#444"/></svg>
                </div>
              </div>
            </section>
            <section class="panel map">
              <svg viewBox="0 0 282 147">
                <path d="M71.500 147V2.500h46V147M73.500 1.500h39.500v121.500h-39.500z"/>
                <path d="M119 0v147M219.500 0v147M120 124h99.500v21.500H120z"/>
                <path d="M61 106.500h9.500v-44h3M153.500 89v3h7v32M170 94h-2.500v4h2.500"/>
              </svg>
            </section>
            <div class="panel bar zoom">
              ${this.btn("hand", "Pan")}${this.btn("touch", "Touch mode")}${this.btn("map", "Mini map", "filled")}<span class="sep"></span>
              ${this.btn("minus", "Zoom out")}<button class="level">10%</button>${this.btn("plus", "Zoom in")}
            </div>
          </aside>
        </div>
      </div>
      <div class="panel bar react">
        ${this.btn("smile", "Reactions")}<span class="sep"></span>
        <button class="avatar">HJ
          <svg class="star" viewBox="0 0 18 18" aria-hidden="true"><circle cx="9" cy="9" r="8.500" fill="#3ff927"/><path d="M9 2.500l1.900 4.300 4.700.5-3.500 3.100 1 4.600L9 12.700 4.900 15l1-4.600-3.500-3.100 4.700-.5z" fill="#fff"/></svg>
        </button>
      </div>
      <div class="pagebar"></div>
    `;
  }
}
